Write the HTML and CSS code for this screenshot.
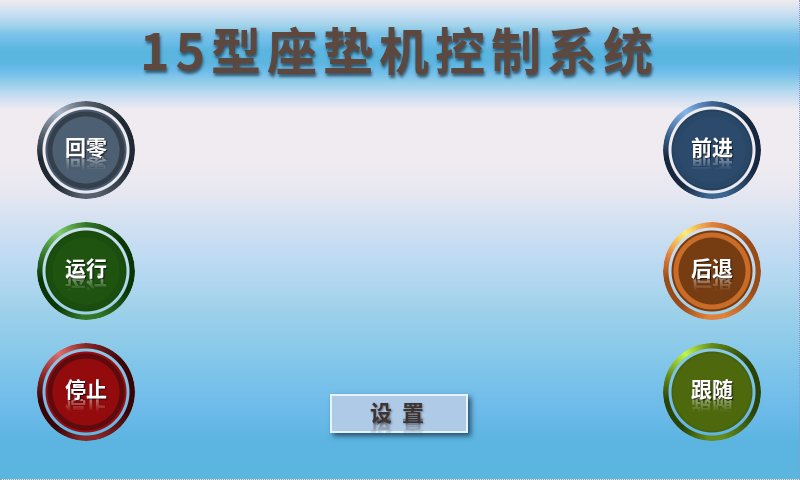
FILE: index.html
```html
<!DOCTYPE html>
<html lang="zh-CN">
<head>
<meta charset="utf-8">
<title>15型座垫机控制系统</title>
<link rel="stylesheet" href="styles.css">
</head>
<body>
<main class="panel">
  <h1 class="title">15型座垫机控制系统</h1>
  <div class="controls">
    <div class="column">
      <button type="button" class="knob knob-home"><span class="caption">回零</span></button>
      <button type="button" class="knob knob-run"><span class="caption">运行</span></button>
      <button type="button" class="knob knob-stop"><span class="caption">停止</span></button>
    </div>
    <button type="button" class="settings"><span class="caption">设  置</span></button>
    <div class="column">
      <button type="button" class="knob knob-forward"><span class="caption">前进</span></button>
      <button type="button" class="knob knob-back"><span class="caption">后退</span></button>
      <button type="button" class="knob knob-follow"><span class="caption">跟随</span></button>
    </div>
  </div>
</main>
</body>
</html>
```

FILE: styles.css
```css
* {
  box-sizing: border-box;
}

body {
  margin: 0;
  font-family: "Noto Sans CJK SC", sans-serif;
}

.panel {
  display: flex;
  flex-direction: column;
  min-height: 100vh;
  border: 1px dotted #8a9ccc;
  border-width: 0 1px 1px 0;
  background: linear-gradient(
    #f0ecf0 0,
    #d3e2f1 10px,
    #bedaf2 17px,
    #a3d3ea 25px,
    #7cc3e9 34px,
    #6dbcea 42px,
    #5ab5df 50px,
    #5ab5df 62px,
    #6dbcea 71px,
    #92cdea 82px,
    #b8d9f0 92px,
    #d6e2f1 101px,
    #efebf0 110px,
    #efebf0 165px,
    #e5e7f1 195px,
    #d1e0f1 225px,
    #c0dbf3 255px,
    #b2d7f0 280px,
    #9ed1e9 310px,
    #8bcae9 345px,
    #79c2ea 380px,
    #6cbaea 412px,
    #5cb5e1 440px,
    #5ab5df 100%
  );
}

.title {
  margin: 0;
  padding: 12px 0 17px;
  color: #5c483f;
  font-size: 50px;
  font-weight: 700;
  line-height: 72px;
  letter-spacing: 6px;
  text-align: center;
  text-shadow: 1px 3px 3px rgba(30, 45, 60, 0.7);
}

.controls {
  display: flex;
  justify-content: space-between;
  padding: 0 38px 38px 37px;
}

.column {
  display: flex;
  flex-direction: column;
  gap: 23px;
}

.knob {
  position: relative;
  width: 98px;
  height: 98px;
  padding: 0 0 8px;
  border: 0;
  border-radius: 50%;
  background: radial-gradient(
    circle closest-side,
    var(--center) 33px,
    var(--groove) 34px,
    var(--groove) 38px,
    var(--edge) 39px,
    var(--edge) 40px,
    transparent 41px
  );
  color: #fff;
  font: 700 21px/30px "Noto Sans CJK SC", sans-serif;
}

.knob::before {
  content: "";
  position: absolute;
  inset: 0;
  border-radius: 50%;
  background: conic-gradient(
    var(--rim) 0deg,
    var(--shade) 50deg,
    var(--shade) 115deg,
    var(--rim) 165deg,
    var(--rim) 185deg,
    var(--shade) 220deg,
    var(--shade) 260deg,
    var(--rim) 290deg,
    var(--shine) 325deg,
    var(--rim) 360deg
  );
  -webkit-mask: radial-gradient(circle closest-side, transparent 43px, #000 44px);
  mask: radial-gradient(circle closest-side, transparent 43px, #000 44px);
}

.caption {
  display: block;
  white-space: pre;
  -webkit-box-reflect: below -12px linear-gradient(transparent 30%, rgba(0, 0, 0, 0.7));
}

.knob .caption {
  text-shadow: 1px 1px 1px rgba(0, 0, 0, 0.7);
}

.knob-home {
  --center: #4d5f72;
  --groove: #353f4b;
  --edge: #465b72;
  --rim: #56616d;
  --shade: #202a34;
  --shine: #a4b3c6;
}

.knob-run {
  --center: #1e5410;
  --groove: #1b4d0e;
  --edge: #174d0a;
  --rim: #337627;
  --shade: #0a3605;
  --shine: #7dcc6c;
}

.knob-stop {
  --center: #940b0d;
  --groove: #5d0b0d;
  --edge: #9b0b0f;
  --rim: #852725;
  --shade: #3c0305;
  --shine: #e06a69;
}

.knob-forward {
  --center: #2b4a6c;
  --groove: #294766;
  --edge: #24415f;
  --rim: #3d6692;
  --shade: #15283f;
  --shine: #85b5ec;
}

.knob-back {
  --center: #773d12;
  --groove: #c86c28;
  --edge: #79390d;
  --rim: #e2813a;
  --shade: #994c18;
  --shine: #ffee75;
}

.knob-follow {
  --center: #4e690d;
  --groove: #4e690d;
  --edge: #46630b;
  --rim: #65891a;
  --shade: #2b4404;
  --shine: #c0f64b;
}

.settings {
  align-self: flex-end;
  width: 138px;
  margin-bottom: 8px;
  padding: 0 4px 4px 0;
  border: 2px solid #e8f2fb;
  background: #aecae6;
  box-shadow: 3px 3px 5px rgba(20, 50, 75, 0.75);
  color: #40322d;
  font: 700 22px/31px "Noto Sans CJK SC", sans-serif;
}

.settings .caption {
  text-shadow: 1px 1px 2px rgba(30, 40, 60, 0.5);
}
```
